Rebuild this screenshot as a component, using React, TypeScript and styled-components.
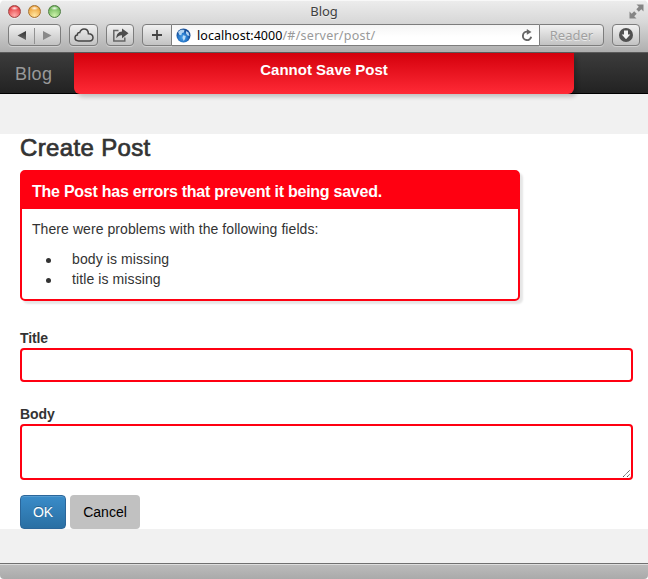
import React from "react";
import styled, { createGlobalStyle, css } from "styled-components";

const GlobalStyle = createGlobalStyle`
  * { box-sizing: border-box; }
  html, body { margin: 0; padding: 0; background: #fff; }
  body { overflow: hidden; font: 14px/20px "Liberation Sans", Arial, sans-serif; color: #333; }
`;

const Window = styled.div`
  display: flex;
  flex-direction: column;
  width: 648px;
  height: 579px;
  border-radius: 5px 5px 4px 4px;
  overflow: hidden;
`;

const Chrome = styled.header`
  flex: none;
  height: 53px;
  background: linear-gradient(#ededed, #d8d8d8 22px, #b0b0b0 51px);
  border-bottom: 1px solid #5a5a5a;
  font-family: "Noto Sans", "Open Sans", sans-serif;
  box-shadow: inset 0 1px #f8f8f8;
`;

const TitleBar = styled.div`
  display: grid;
  grid-template-columns: 1fr auto 1fr;
  align-items: center;
  height: 24px;
  padding: 0 4px 0 7px;
`;

const Lights = styled.div`
  display: flex;
  gap: 7px;
  padding: 0 0 2px 1px;
`;

const Light = styled.span<{ $rim: string; $mid: string; $glow: string }>`
  width: 13px;
  height: 13px;
  border-radius: 50%;
  border: 1px solid ${(p) => p.$rim};
  background:
    radial-gradient(ellipse 4px 2px at 50% 20%, rgba(255, 255, 255, 0.95), transparent),
    radial-gradient(circle at 50% 85%, ${(p) => p.$glow}, ${(p) => p.$mid} 75%);
  box-shadow: 0 1px rgba(255, 255, 255, 0.5);
`;

const WindowTitle = styled.h1`
  margin: 0 3px 2px 0;
  font-size: 13px;
  line-height: 22px;
  font-weight: 400;
  letter-spacing: -0.1px;
  color: #404040;
  text-shadow: 0 1px rgba(255, 255, 255, 0.5);
`;

const Expand = styled.div`
  justify-self: end;
  height: 15px;
  width: 15px;
  margin-top: -2px;
`;

const Toolbar = styled.div`
  display: flex;
  gap: 8px;
  padding: 0 8px;
`;

const face = css`
  border: 1px solid #7d7d7d;
  background: linear-gradient(#f1f1f1, #c2c2c2);
  box-shadow: 0 1px rgba(255, 255, 255, 0.35);
`;

const ToolButton = styled.button<{ $width: number }>`
  ${face}
  display: flex;
  align-items: center;
  justify-content: center;
  width: ${(p) => p.$width}px;
  height: 22px;
  padding: 0;
  border-radius: 4px;
`;

const AddressGroup = styled.div`
  display: flex;
  width: 462px;
  height: 22px;
`;

const AddButton = styled(ToolButton)`
  border-radius: 4px 0 0 4px;
`;

const Address = styled.div`
  display: flex;
  align-items: center;
  flex: 1;
  padding: 0 5px 0 4px;
  border: solid #7d7d7d;
  border-width: 1px 0;
  background: linear-gradient(#f5f5f5, #fff 60%);
  font-size: 12.5px;
  line-height: 20px;
  color: #999;
`;

const Host = styled.span`
  margin: 1px 0 0 6px;
  color: #000;
  letter-spacing: 0.05px;
`;

const Path = styled.span`
  flex: 1;
  margin-top: 1px;
  letter-spacing: 0.25px;
`;

const Reader = styled.button`
  ${face}
  width: 65px;
  padding: 0;
  border-radius: 0 4px 4px 0;
  font: 13px/18px "Noto Sans", sans-serif;
  letter-spacing: 0;
  color: #a0a0a0;
  text-shadow: 0 1px rgba(255, 255, 255, 0.6);
`;

const NavBar = styled.nav`
  position: relative;
  z-index: 1;
  display: flex;
  flex: none;
  height: 41px;
  background: linear-gradient(#3c3c3c, #222);
  border-bottom: 1px solid #000;
`;

const Brand = styled.a`
  width: 74px;
  padding-left: 15px;
  font-size: 18px;
  line-height: 43px;
  color: #999;
  letter-spacing: 0.3px;
`;

const Flash = styled.div`
  width: 500px;
  height: 41px;
  border-radius: 0 0 6px 6px;
  background: linear-gradient(#d4000c, #ff2a36);
  box-shadow: 3px 3px 4px rgba(0, 0, 0, 0.2);
  text-align: center;
  font-size: 15px;
  font-weight: 700;
  line-height: 34px;
  color: #fff;
`;

const Page = styled.main`
  flex: 1;
  padding-top: 40px;
  background: #f1f1f1;
`;

const Content = styled.section`
  height: 395px;
  padding: 0 15px 0 20px;
  background: #fff;
`;

const Heading = styled.h2`
  margin: 0;
  height: 36px;
  font-size: 24px;
  line-height: 27px;
  font-weight: 400;
  letter-spacing: 0.35px;
  -webkit-text-stroke: 0.7px #333;
`;

const ErrorPanel = styled.div`
  width: 500px;
  height: 131px;
  border: 2px solid #ff0011;
  border-radius: 5px;
  box-shadow: 3px 3px 2px rgba(0, 0, 0, 0.1);
`;

const ErrorTitle = styled.h3`
  margin: 0 0 10px;
  padding-left: 10px;
  height: 37px;
  background: #ff0011;
  color: #fff;
  font-size: 16px;
  letter-spacing: -0.25px;
  line-height: 39px;
`;

const ErrorText = styled.p`
  margin: 0 0 10px;
  padding-left: 10px;
  letter-spacing: 0.07px;
`;

const ErrorList = styled.ul`
  margin: 0;
  padding-left: 50px;
  letter-spacing: 0.1px;
`;

const ErrorItem = styled.li`
  display: flex;
  align-items: center;
  height: 20px;

  &::before {
    content: "";
    width: 5px;
    height: 5px;
    margin: 2px 21px 0 -26px;
    border-radius: 50%;
    background: #333;
  }
`;

const Form = styled.form`
  padding-top: 27px;
`;

const Field = styled.label<{ $gap: number }>`
  display: block;
  margin-bottom: ${(p) => p.$gap}px;
`;

const FieldName = styled.span`
  display: block;
  height: 20px;
  font-weight: 700;
  letter-spacing: -0.1px;
`;

const control = css`
  display: block;
  width: 100%;
  border: 2px solid #ff0011;
  border-radius: 4px;
  background: #fff;
  outline: 0;
`;

const TextInput = styled.input`
  ${control}
  height: 34px;
`;

const TextArea = styled.div`
  ${control}
  display: flex;
  align-items: flex-end;
  justify-content: flex-end;
  height: 56px;
  padding: 0;
`;

const Actions = styled.div`
  display: flex;
  gap: 4px;
`;

const ActionButton = styled.button<{ $primary?: boolean }>`
  width: ${(p) => (p.$primary ? 46 : 70)}px;
  height: 34px;
  padding: 0;
  border: ${(p) => (p.$primary ? "1px solid #2b669a" : "0")};
  border-radius: 4px;
  background: ${(p) => (p.$primary ? "linear-gradient(#3a8cc9, #2a6fa3)" : "#c1c1c1")};
  box-shadow: ${(p) => (p.$primary ? "inset 0 1px rgba(255,255,255,.15)" : "none")};
  color: ${(p) => (p.$primary ? "#fff" : "#000")};
  text-shadow: ${(p) => (p.$primary ? "0 -1px rgba(0,0,0,.25)" : "none")};
  font: 14px/20px "Liberation Sans", Arial, sans-serif;
`;

const StatusBar = styled.footer`
  flex: none;
  height: 16px;
  border-top: 1px solid #707070;
  background: linear-gradient(#dedede 1px, #bbb 1px, #aaa);
`;

const Arrows = () => (
  <svg width="51" height="20">
    <defs>
      <linearGradient id="arrow" x2="0" y2="1">
        <stop stopColor="#333" />
        <stop offset="1" stopColor="#666" />
      </linearGradient>
    </defs>
    <path d="M8.5 10.5 17 6v9z" fill="url(#arrow)" />
    <path d="M25.5 3v16" stroke="#929292" />
    <path d="M42.500 10.500 34 6v9z" fill="#898989" />
  </svg>
);

const Cloud = () => (
  <svg width="22" height="16" fill="none" stroke="#454545" strokeWidth="1.5">
    <path d="M5.700 13.900C3.500 13.900 2 12.700 2 10.800C2 9 3.100 8 4.400 7.900C4.300 6.300 5.200 5.400 6.700 5.600C7.600 3.200 9 2 11 2C13.600 2 15.300 4 15.400 6.700C17.800 6.500 20 8.100 20 10.500C20 12.700 18.600 13.900 16.500 13.900Z" />
  </svg>
);

const Share = () => (
  <svg width="18" height="16" fill="none">
    <path d="M7.500 3.500H2.800v10.500h11V10.500" stroke="#666" strokeWidth="1.500" />
    <path d="M5.300 11.300C5.500 7 7.500 4.800 11 4.500V1.500L17.500 6.300 11 11.200V8.200C8.500 8 7 9 5.300 11.300Z" fill="#4c4c4c" />
  </svg>
);

const Plus = () => (
  <svg width="12" height="12" stroke="#444" strokeWidth="1.800">
    <path d="M6 1v10M1 6h10" />
  </svg>
);

const Globe = () => (
  <svg width="15" height="15">
    <defs>
      <radialGradient id="sea" cx=".45" cy=".65">
        <stop stopColor="#50a5ec" />
        <stop offset=".65" stopColor="#2677c9" />
        <stop offset="1" stopColor="#174f98" />
      </radialGradient>
    </defs>
    <circle cx="7.500" cy="7.500" r="7" fill="url(#sea)" />
    <path d="M2 4C4 1.500 6.500 1.500 8.500 2.200L7.800 4.500 6 5 5.300 7.200 3.500 7ZM7 7.300 9.800 8 9 11 7.700 13 6.500 10ZM10 3 12.500 4.600 13.500 8 11.500 7.600 10 5.600Z" fill="#cee8fc" opacity=".85" />
  </svg>
);

const Reload = () => (
  <svg width="14" height="14" fill="none">
    <path d="M7.500 3.700A4.200 4.200 0 1 0 11.200 8.800" stroke="#666" strokeWidth="1.900" />
    <path d="M6.800 1 11.500 4 6.800 6.700Z" fill="#666" />
  </svg>
);

const Download = () => (
  <svg width="16" height="16">
    <circle cx="8" cy="8" r="7" fill="#505050" />
    <path d="M6 3.500H10V7.500H12.300L8 12.300 3.700 7.500H6Z" fill="#f2f2f2" />
  </svg>
);

const ExpandIcon = () => (
  <svg width="15" height="15" fill="#858585">
    <path d="M7.500.500H14.500V7.500L12.300 5.300 9.800 7.800 7.300 5.300 9.800 2.800Z" />
    <path d="M.500 7.500 2.700 9.700 5.200 7.200 7.700 9.700 5.200 12.200 7.500 14.500H.500Z" />
  </svg>
);

const Grip = () => (
  <svg width="9" height="9" stroke="#555" strokeWidth="1" strokeDasharray="1.400 .4">
    <path d="M1 8 8 1M5 8 8 5" />
  </svg>
);

const problems = ["body is missing", "title is missing"];

export default function App() {
  return (
    <Window>
      <GlobalStyle />
      <Chrome>
        <TitleBar>
          <Lights>
            <Light $rim="#a14544" $mid="#e64144" $glow="#ffaaa9" />
            <Light $rim="#a77331" $mid="#eda33c" $glow="#ffe5a0" />
            <Light $rim="#4e7c42" $mid="#72b85b" $glow="#cbf1a9" />
          </Lights>
          <WindowTitle>Blog</WindowTitle>
          <Expand><ExpandIcon /></Expand>
        </TitleBar>
        <Toolbar>
          <ToolButton $width={53} aria-label="Back and forward"><Arrows /></ToolButton>
          <ToolButton $width={29} aria-label="iCloud tabs"><Cloud /></ToolButton>
          <ToolButton $width={28} aria-label="Share"><Share /></ToolButton>
          <AddressGroup>
            <AddButton $width={30} aria-label="Add bookmark"><Plus /></AddButton>
            <Address>
              <Globe />
              <Host>localhost:4000</Host>
              <Path>/#/server/post/</Path>
              <Reload />
            </Address>
            <Reader>Reader</Reader>
          </AddressGroup>
          <ToolButton $width={28} aria-label="Downloads"><Download /></ToolButton>
        </Toolbar>
      </Chrome>
      <NavBar>
        <Brand>Blog</Brand>
        <Flash>Cannot Save Post</Flash>
      </NavBar>
      <Page>
        <Content>
          <Heading>Create Post</Heading>
          <ErrorPanel>
            <ErrorTitle>The Post has errors that prevent it being saved.</ErrorTitle>
            <ErrorText>There were problems with the following fields:</ErrorText>
            <ErrorList>
              {problems.map((problem) => (
                <ErrorItem key={problem}>{problem}</ErrorItem>
              ))}
            </ErrorList>
          </ErrorPanel>
          <Form>
            <Field $gap={22}>
              <FieldName>Title</FieldName>
              <TextInput />
            </Field>
            <Field $gap={15}>
              <FieldName>Body</FieldName>
              <TextArea role="textbox" aria-multiline="true"><Grip /></TextArea>
            </Field>
            <Actions>
              <ActionButton type="button" $primary>OK</ActionButton>
              <ActionButton type="button">Cancel</ActionButton>
            </Actions>
          </Form>
        </Content>
      </Page>
      <StatusBar />
    </Window>
  );
}
